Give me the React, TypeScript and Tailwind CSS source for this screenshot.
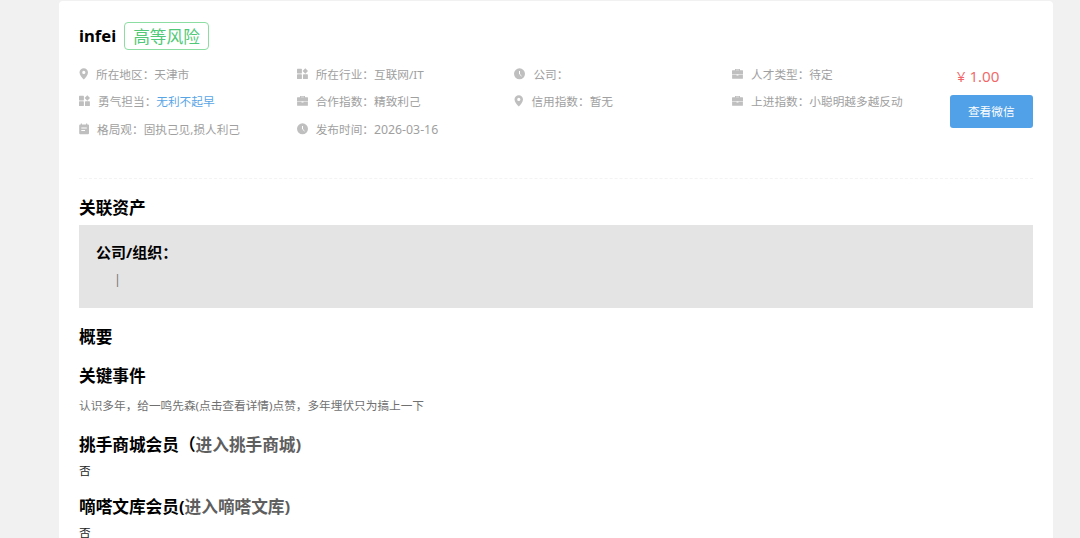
import React, { ReactNode } from 'react';

type IconName = 'pin' | 'grid' | 'calendar' | 'briefcase' | 'clock';

interface Field {
  icon: IconName;
  label: string;
  value?: string;
  kind?: 'link' | 'date';
}

const columns: Field[][] = [
  [
    { icon: 'pin', label: '所在地区：', value: '天津市' },
    { icon: 'grid', label: '勇气担当：', value: '无利不起早', kind: 'link' },
    { icon: 'calendar', label: '格局观：', value: '固执己见,损人利己' },
  ],
  [
    { icon: 'grid', label: '所在行业：', value: '互联网/IT' },
    { icon: 'briefcase', label: '合作指数：', value: '精致利己' },
    { icon: 'clock', label: '发布时间：', value: '2026-03-16', kind: 'date' },
  ],
  [
    { icon: 'clock', label: '公司：' },
    { icon: 'pin', label: '信用指数：', value: '暂无' },
  ],
  [
    { icon: 'briefcase', label: '人才类型：', value: '待定' },
    { icon: 'briefcase', label: '上进指数：', value: '小聪明越多越反动' },
  ],
];

const valueClass = {
  link: 'text-[#58a5e6]',
  date: 'text-[12.3px]',
};

function Icon({ name }: { name: IconName }) {
  switch (name) {
    case 'pin':
      return (
        <svg className="w-[9px] h-3 shrink-0" viewBox="0 0 9 12" fill="currentColor">
          <path fillRule="evenodd" d="M4.8 0.2C2.4 0.2 0.5 2.1 0.5 4.4c0 2.7 2.9 5.3 4.3 7.2 1.4-1.9 4.2-4.5 4.2-7.2C9 2.1 7.1 0.2 4.8 0.2zM4.8 2.8a1.6 1.6 0 1 1 0 3.2 1.6 1.6 0 0 1 0-3.2z" />
        </svg>
      );
    case 'grid':
      return (
        <svg className="w-[11px] h-3 shrink-0" viewBox="0 0 11 12" fill="currentColor">
          <rect x="0" y="0.7" width="4.9" height="4.7" rx="0.6" />
          <path d="M8.3 0.2l2.700 2.800-2.700 2.800-2.700-2.800z" />
          <rect x="0" y="6.3" width="4.9" height="4.7" rx="0.6" />
          <rect x="6" y="6.3" width="4.9" height="4.7" rx="0.6" />
        </svg>
      );
    case 'calendar':
      return (
        <svg className="w-2.5 h-3 shrink-0" viewBox="0 0 10 12" fill="currentColor">
          <path fillRule="evenodd" d="M1.8 0.5h1.2v1h4v-1h1.2v1H9a1 1 0 0 1 1 1v7.7a1 1 0 0 1-1 1H1.2a1 1 0 0 1-1-1V2.5a1 1 0 0 1 1-1h.6zM2.3 4.5v1h5.5v-1zM2.3 7v1h3.700V7z" />
        </svg>
      );
    case 'briefcase':
      return (
        <svg className="w-[11px] h-3 shrink-0" viewBox="0 0 11 12" fill="currentColor">
          <path fillRule="evenodd" d="M3 2.3V1h5v1.3h2.5a.5.5 0 0 1 .5.5v3.800H6.500v-.4h-2v.4H0V2.800a.5.5 0 0 1 .5-.5zM4 1.800v.5h3v-.5z" />
          <path d="M0.1 7h4.400v.4h2V7h4.400v3.800H.1z" />
        </svg>
      );
    case 'clock':
      return (
        <svg className="w-[11px] h-3 shrink-0" viewBox="0 0 11 12">
          <circle cx="5.5" cy="5.8" r="5.5" fill="currentColor" />
          <path d="M5.5 3v3.1l2 1.9" fill="none" stroke="#fff" strokeWidth="1" />
        </svg>
      );
  }
}

function FieldRow({ icon, label, value, kind }: Field) {
  return (
    <li className="flex h-[27.3px] items-center gap-2 whitespace-nowrap">
      <span className="-mt-0.5 text-[#bfbfbf]"><Icon name={icon} /></span>
      <span>
        {label}
        {value && <span className={kind ? valueClass[kind] : ''}>{value}</span>}
      </span>
    </li>
  );
}

function Heading({ children, className = '' }: { children: ReactNode; className?: string }) {
  return <h3 className={`text-[16.67px] leading-6 font-bold text-black ${className}`}>{children}</h3>;
}

export default function App() {
  return (
    <div className="h-[538px] overflow-hidden bg-[#f1f1f1] pt-px pl-[59px] font-['Noto_Sans','Noto_Sans_CJK_SC',sans-serif] text-[11.67px] leading-[18px]">
      <div className="w-[994px] rounded bg-white px-5 pt-[21px]">
        <header className="flex h-7 items-center gap-2">
          <h1 className="-mt-px text-[16.67px] font-bold text-black">infei</h1>
          <span className="flex h-7 items-center rounded border border-[#8bdda2] px-2 pt-0.5 text-[16.67px] text-[#50c878]">高等风险</span>
        </header>

        <section className="flex h-[129px] border-b border-dashed border-[#f3f3f3] pt-[11.4px] text-[#a0a0a0]">
          {columns.map((fields, i) => (
            <ul key={i} className="w-[217.7px] shrink-0">
              {fields.map((field) => (
                <FieldRow key={field.label} {...field} />
              ))}
            </ul>
          ))}
          <div className="w-[83px] shrink-0 pt-[3.6px]">
            <p className="pl-[7px] font-['Open_Sans','Noto_Sans',sans-serif] text-[15.2px] leading-[22px] text-[#f16567]">¥ 1.00</p>
            <button className="mt-2 h-[33px] w-[83px] rounded-[3px] bg-[#50a1e7] pt-0.5 text-[11.67px] text-white">查看微信</button>
          </div>
        </section>

        <Heading className="mt-[17px]">关联资产</Heading>
        <div className="mt-[5px] h-[83px] bg-[#e4e4e4] px-[17px] pt-4">
          <h4 className="text-[15px] leading-[22px] font-bold text-black">公司/组织：</h4>
          <p className="mt-2 pl-[18px] text-[12.5px] text-[#777]">|</p>
        </div>

        <Heading className="mt-[17px]">概要</Heading>
        <Heading className="mt-[15px]">关键事件</Heading>
        <p className="mt-[9px] text-[#707070]">认识多年，给一鸣先森(点击查看详情)点赞，多年埋伏只为搞上一下</p>

        <Heading className="mt-[18px]">
          挑手商城会员（<a className="text-[#5e5e5e]">进入挑手商城</a><span className="text-[#5e5e5e]">)</span>
        </Heading>
        <p className="mt-[5px] text-[#222]">否</p>
        <Heading className="mt-[15px]">
          嘀嗒文库会员(<a className="text-[#5e5e5e]">进入嘀嗒文库)</a>
        </Heading>
        <p className="mt-[5px] text-[#222]">否</p>
      </div>
    </div>
  );
}
